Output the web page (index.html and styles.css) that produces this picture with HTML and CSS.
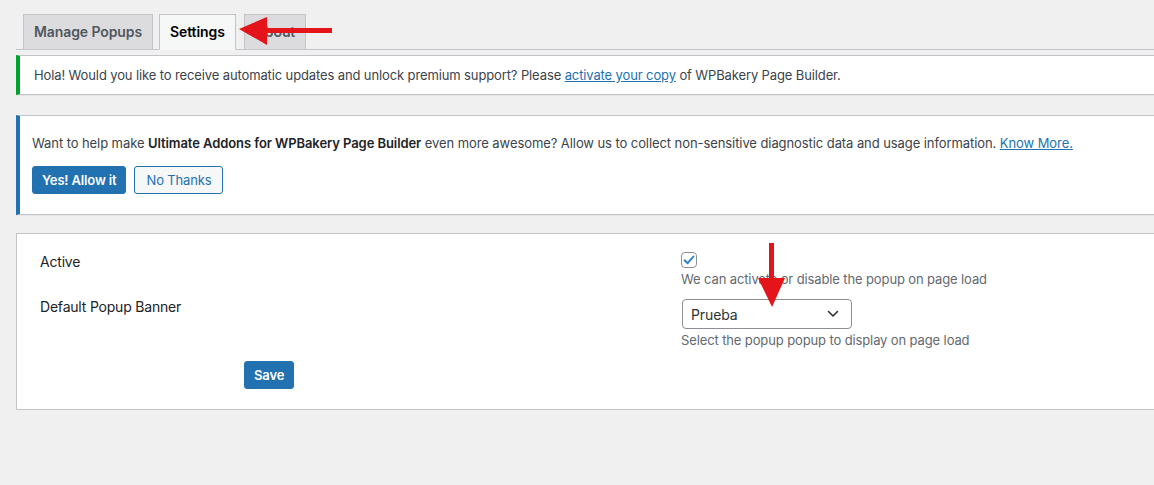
FILE: index.html
```html
<!DOCTYPE html>
<html lang="en">
<head>
<meta charset="utf-8">
<title>Settings</title>
<link rel="stylesheet" href="styles.css">
</head>
<body>
<div class="wrap">
  <nav class="tabs">
    <a class="tab">Manage Popups</a>
    <a class="tab tab-active">Settings</a>
    <a class="tab tab-about">About</a>
  </nav>

  <div class="notice notice-green">
    <p>Hola! Would you like to receive automatic updates and unlock premium support? Please <a class="link">activate your copy</a> of WPBakery Page Builder.</p>
  </div>

  <div class="notice notice-blue">
    <p>Want to help make <strong>Ultimate Addons for WPBakery Page Builder</strong> even more awesome? Allow us to collect non-sensitive diagnostic data and usage information. <a class="link">Know More.</a></p>
    <div class="notice-actions">
      <button class="btn btn-primary">Yes! Allow it</button>
      <button class="btn btn-secondary">No Thanks</button>
    </div>
  </div>

  <div class="panel">
    <div class="row row-active">
      <div class="label label-active">Active</div>
      <div class="field">
        <span class="checkbox">
          <svg viewBox="0 0 16 16" width="16" height="16"><path d="M3.6 8.2 L6.6 11.2 L12.4 4.6" fill="none" stroke="#3582c4" stroke-width="2" stroke-linecap="round" stroke-linejoin="round"/></svg>
        </span>
        <p class="desc">We can activate or disable the popup on page load</p>
      </div>
    </div>
    <div class="row row-banner">
      <div class="label">Default Popup Banner</div>
      <div class="field">
        <div class="select">
          <span>Prueba</span>
          <svg viewBox="0 0 12 8" width="12" height="8"><path d="M1.5 1.5 L6 6 L10.5 1.5" fill="none" stroke="#2c3338" stroke-width="1.6" stroke-linecap="round" stroke-linejoin="round"/></svg>
        </div>
        <p class="desc desc-select">Select the popup popup to display on page load</p>
      </div>
    </div>
    <div class="save-row">
      <button class="btn btn-primary btn-save">Save</button>
    </div>
  </div>
</div>

<svg class="arrow arrow-left" width="100" height="34" viewBox="0 0 100 34">
  <rect x="25" y="11" width="68" height="5" fill="#e3151a"/>
  <polygon points="0,12 28,0 28,28" fill="#e3151a"/>
</svg>
<svg class="arrow arrow-down" width="30" height="68" viewBox="0 0 30 68">
  <rect x="12" y="0" width="5" height="40" fill="#e3151a"/>
  <polygon points="1,35 28,35 15,64" fill="#e3151a"/>
</svg>
</body>
</html>
```

FILE: styles.css
```css
html, body {
  margin: 0;
  padding: 0;
}
body {
  background: #f0f0f1;
  font-family: Inter, "Noto Sans", "Liberation Sans", sans-serif;
  font-size: 13px;
  letter-spacing: -0.12px;
  color: #3c434a;
  overflow: hidden;
  width: 1154px;
  height: 485px;
  position: relative;
}
.wrap {
  margin-left: 16px;
  width: 1200px;
}
.tabs {
  display: flex;
  padding: 14px 0 0 7px;
  border-bottom: 1px solid #c3c4c7;
  gap: 6px;
}
.tab {
  display: block;
  padding: 5px 10px;
  font-size: 14px;
  line-height: 24px;
  font-weight: 600;
  color: #50575e;
  background: #dcdcde;
  border: 1px solid #c3c4c7;
  border-bottom: none;
  margin-bottom: -1px;
  height: 24px;
  letter-spacing: -0.1px;
}
.tab-active {
  background: #f6f7f7;
  color: #000;
  border-bottom: 1px solid #f6f7f7;
}
.tab-about {
  margin-left: 2px;
}
.notice {
  background: #fff;
  border: 1px solid #c3c4c7;
  border-left-width: 4px;
  box-shadow: 0 1px 1px rgba(0,0,0,.04);
}
.notice p {
  margin: 0;
  line-height: 19px;
}
.notice-green {
  margin-top: 5px;
  border-left-color: #00a32a;
  padding: 10px 14px 9px 14px;
}
.notice-blue {
  margin-top: 20px;
  border-left-color: #2271b1;
  padding: 18px 12px 20px 12px;
}
.notice-blue p {
  letter-spacing: -0.08px;
}
.notice-blue strong {
  font-weight: 600;
  color: #1d2327;
}
.link {
  color: #2271b1;
  text-decoration: underline;
}
.notice-actions {
  display: flex;
  gap: 8px;
  margin-top: 13px;
}
.btn {
  font-family: inherit;
  font-size: 13px;
  letter-spacing: -0.15px;
  height: 28px;
  padding: 0 9px;
  border-radius: 3px;
  line-height: 26px;
  cursor: pointer;
}
.btn-primary {
  background: #2271b1;
  border: 1px solid #2271b1;
  color: #fff;
  font-weight: 600;
}
.btn-secondary {
  background: #f6f7f7;
  border: 1px solid #2271b1;
  color: #2271b1;
  font-weight: 400;
  padding: 0 11px;
}
.panel {
  margin-top: 18px;
  background: #fff;
  border: 1px solid #c3c4c7;
  padding: 17px 0 20px 23px;
}
.row {
  display: grid;
  grid-template-columns: 641px 1fr;
}
.label {
  font-size: 14px;
  line-height: 19px;
  color: #1d2327;
  letter-spacing: -0.2px;
}
.label-active {
  margin-top: 1px;
}
.row-banner {
  margin-top: 8px;
}
.checkbox {
  display: block;
  width: 14px;
  height: 14px;
  border: 1px solid #8c8f94;
  border-radius: 4px;
  margin-top: 1px;
  position: relative;
}
.checkbox svg {
  position: absolute;
  left: -1px;
  top: -1px;
}
.desc {
  margin: 2px 0 0;
  line-height: 19px;
  color: #646970;
}
.select {
  box-sizing: border-box;
  width: 170px;
  height: 30px;
  margin-top: 2px;
  margin-left: 1px;
  border: 1px solid #8c8f94;
  border-radius: 4px;
  display: flex;
  align-items: center;
  justify-content: space-between;
  padding: 0 12px 0 8px;
  font-size: 14px;
  color: #2c3338;
}
.desc-select {
  margin-top: 2px;
}
.save-row {
  margin-top: 11px;
  padding-left: 204px;
}
.btn-save {
  padding: 0 9px;
}
.arrow {
  position: absolute;
}
.arrow-left {
  left: 239px;
  top: 17px;
}
.arrow-down {
  left: 757px;
  top: 243px;
}
```
